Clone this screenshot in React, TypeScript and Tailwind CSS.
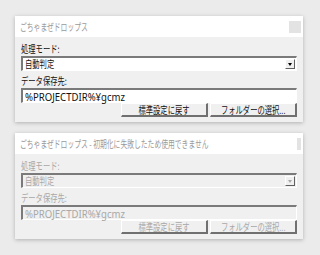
import React from "react";

const font = { fontFamily: '"Noto Sans CJK JP", "Noto Sans", sans-serif' };

function J({ children, center }: { children: React.ReactNode; center?: boolean }) {
  return (
    <span
      className={`inline-block whitespace-nowrap scale-x-[0.73] text-[10px] leading-none ${center ? "origin-center" : "origin-left"}`}
    >
      {children}
    </span>
  );
}

function Panel({ title, disabled }: { title: string; disabled?: boolean }) {
  const txt = disabled ? "text-[#a8a8a8]" : "text-[#111111]";
  const fieldBg = disabled ? "bg-[#f0f0f0]" : "bg-white";
  const btn = `w-[87px] h-[14px] bg-[#f0f0f0] border-t border-l border-t-white border-l-white border-b-[2px] border-r-[2px] border-b-[#707070] border-r-[#707070] flex items-center justify-center overflow-visible ${txt}`;
  return (
    <div className="w-[288px] h-[106px] bg-[#f0f0f0] flex flex-col shadow-[0_1px_4px_rgba(0,0,0,0.25)]">
      <div className="h-[21px] bg-white flex items-center justify-between pl-[5px] pr-[2px]">
        <span className="inline-block whitespace-nowrap origin-left scale-x-[0.68] text-[10px] leading-none text-[#9a9a9a]">
          {title}
        </span>
        <div className="w-[12px] h-[12px] bg-[#e3e3e3]" />
      </div>
      <div className="flex flex-col px-[6px] pt-[5px]">
        <div className={`h-[14px] flex items-center ${txt}`}>
          <J>処理モード:</J>
        </div>
        <div
          className={`h-[15px] ${fieldBg} border-t-[2px] border-l-[2px] border-t-[#7a7a7a] border-l-[#7a7a7a] border-b border-r border-b-white border-r-white flex items-center justify-between pl-[2px] pr-[1px]`}
        >
          <span className={`flex items-center ${txt}`}>
            <J>自動判定</J>
          </span>
          <div className="w-[10px] h-[10px] bg-[#f0f0f0] border-r border-b border-r-[#606060] border-b-[#606060] border-l border-t border-l-white border-t-white flex items-center justify-center">
            <div
              className={`w-0 h-0 border-l-[2.5px] border-r-[2.5px] border-t-[3px] border-l-transparent border-r-transparent ${disabled ? "border-t-[#a8a8a8]" : "border-t-black"}`}
            />
          </div>
        </div>
        <div className={`h-[14px] mt-[3px] flex items-center ${txt}`}>
          <J>データ保存先:</J>
        </div>
        <div
          className={`h-[15px] ${fieldBg} border-t-[2px] border-l-[2px] border-t-[#7a7a7a] border-l-[#7a7a7a] border-b border-r border-b-white border-r-white flex items-center pl-[2px]`}
        >
          <span
            className={`inline-block origin-left scale-x-[0.87] text-[11px] leading-none whitespace-nowrap ${txt}`}
            style={{ fontFamily: '"Noto Sans", "Noto Sans CJK JP", sans-serif' }}
          >
            %PROJECTDIR%¥gcmz
          </span>
        </div>
        <div className="flex justify-end gap-[2px]">
          <div className={btn}>
            <J center>標準設定に戻す</J>
          </div>
          <div className={btn}>
            <J center>フォルダーの選択...</J>
          </div>
        </div>
      </div>
    </div>
  );
}

export default function App() {
  return (
    <div className="w-[320px] h-[255px] bg-[#ebebeb] pt-[16px] pl-[15px] flex flex-col gap-[11px]" style={font}>
      <Panel title="ごちゃまぜドロップス" />
      <Panel title="ごちゃまぜドロップス - 初期化に失敗したため使用できません" disabled />
    </div>
  );
}
